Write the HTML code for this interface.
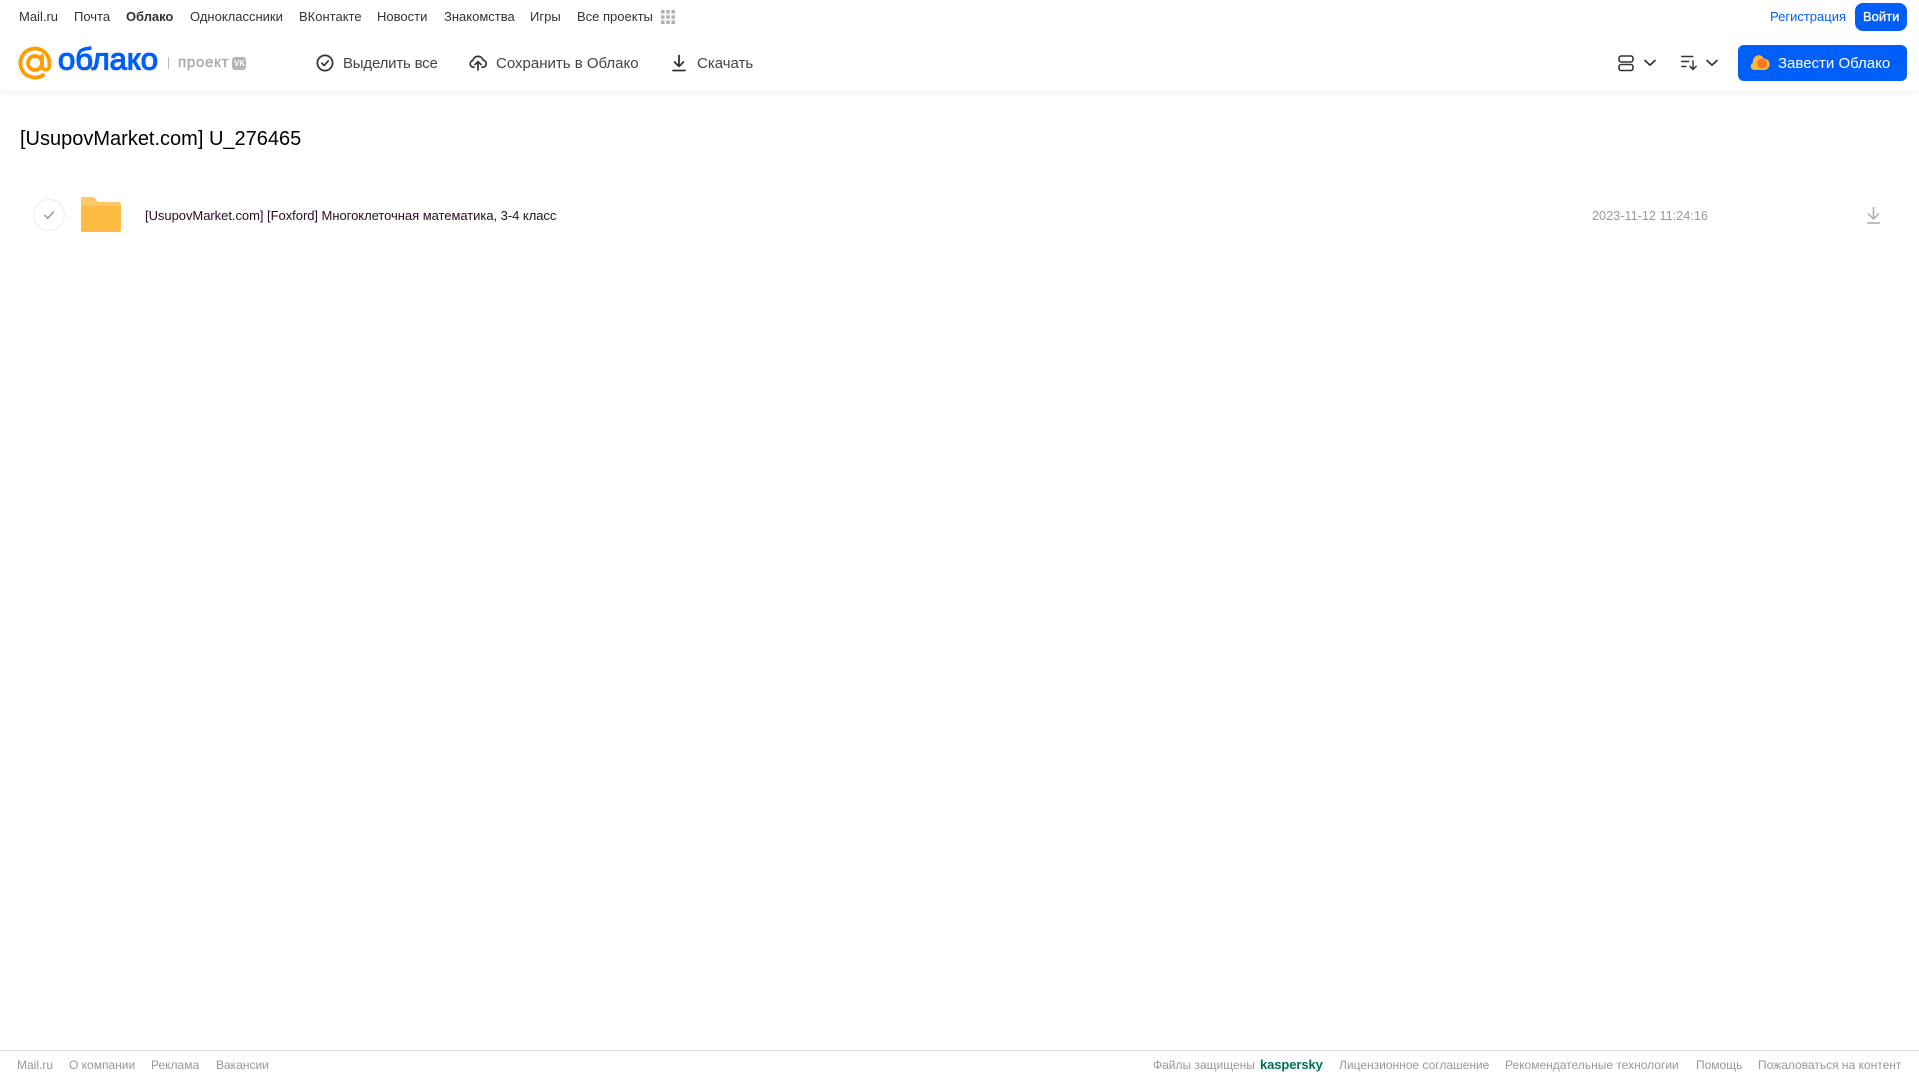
<!DOCTYPE html>
<html lang="ru">
<head>
<meta charset="utf-8">
<title>Облако</title>
<style>
html,body{margin:0;padding:0;background:#fff;width:1919px;height:1079px;overflow:hidden}
body{position:relative;font-family:"Liberation Sans",Arial,sans-serif;color:#333}
.t{position:absolute;white-space:nowrap;line-height:16px}
.n{top:9px;font-size:13px;color:#333}
.b{top:56px;font-size:15px;color:#444}
.f{top:1058px;font-size:12px;color:#999;line-height:14px}
svg{position:absolute;display:block;overflow:visible}
#hdr{position:absolute;left:0;top:0;width:1919px;height:91px;background:#fff;box-shadow:0 1px 6px rgba(0,0,0,.08)}
#foot{position:absolute;left:0;top:1050px;width:1919px;height:1px;background:#ddd}
.btn{position:absolute;background:#005ff9}
</style>
</head>
<body>
<div id="hdr"></div>
<span class="t n" style="left:19px">Mail.ru</span>
<span class="t n" style="left:74px">Почта</span>
<span class="t n" style="left:126px;font-weight:bold;letter-spacing:-.05px">Облако</span>
<span class="t n" style="left:190px">Одноклассники</span>
<span class="t n" style="left:299px">ВКонтакте</span>
<span class="t n" style="left:377px">Новости</span>
<span class="t n" style="left:444px">Знакомства</span>
<span class="t n" style="left:530px">Игры</span>
<span class="t n" style="left:577px">Все проекты</span>
<svg style="left:661px;top:10px" width="14" height="14" fill="#b0b0b0"><rect x="0" y="0" width="3.6" height="3.6" rx=".8"/><rect x="5.2" y="0" width="3.6" height="3.6" rx=".8"/><rect x="10.4" y="0" width="3.6" height="3.6" rx=".8"/><rect x="0" y="5.2" width="3.6" height="3.6" rx=".8"/><rect x="5.2" y="5.2" width="3.6" height="3.6" rx=".8"/><rect x="10.4" y="5.2" width="3.6" height="3.6" rx=".8"/><rect x="0" y="10.4" width="3.6" height="3.6" rx=".8"/><rect x="5.2" y="10.4" width="3.6" height="3.6" rx=".8"/><rect x="10.4" y="10.4" width="3.6" height="3.6" rx=".8"/></svg>
<span class="t n" style="left:1770px;color:#005ff9">Регистрация</span>
<div class="btn" style="left:1855px;top:3px;width:52px;height:28px;border-radius:8px"></div>
<span class="t n" style="left:1863px;color:#fff;-webkit-text-stroke:.3px #fff">Войти</span>

<svg style="left:0;top:40px" width="170" height="45">
<g fill="none" stroke="#ff9e00" stroke-width="3.800" stroke-linecap="round"><circle cx="35" cy="23" r="7"/><path d="M42 16v10a3.700 3.700 0 0 0 7.400 0v-3a14.500 14.500 0 1 0-6.300 12"/></g>
<text x="58" y="29.500" font-family="'Liberation Sans',sans-serif" font-size="31" fill="#005ff9" stroke="#005ff9" stroke-width="1.200" textLength="100" lengthAdjust="spacingAndGlyphs">облако</text>
<rect x="168" y="17" width="1" height="12" fill="#bbb"/>
</svg>
<span class="t" style="left:178px;top:55px;font-size:15px;color:#aaa;-webkit-text-stroke:.4px #aaa;letter-spacing:.75px">проект</span>
<div style="position:absolute;left:232px;top:57px;width:14px;height:13px;background:#b5b5b5;border-radius:3px"></div>
<span class="t" style="left:234px;top:58px;font-size:8px;line-height:11px;font-weight:bold;color:#fff">VK</span>

<svg style="left:316px;top:54px" width="18" height="18" fill="none" stroke="#333" stroke-width="1.700" stroke-linecap="round" stroke-linejoin="round"><circle cx="9" cy="9" r="7.600"/><path d="M5.800 9.200l2.300 2.300 4.200-4.600"/></svg>
<span class="t b" style="left:343px;letter-spacing:-.2px">Выделить все</span>
<svg style="left:469px;top:53px" width="18" height="18" fill="none" stroke="#333" stroke-width="1.700" stroke-linecap="round" stroke-linejoin="round"><path d="M5 14.200H4.400a3.400 3.400 0 0 1-.6-6.700 5.400 5.400 0 0 1 10.400-.4 3.600 3.600 0 0 1 .1 7.100H13"/><path d="M9 17V9M6 11.500L9 8.600l3 2.900"/></svg>
<span class="t b" style="left:496px">Сохранить в Облако</span>
<svg style="left:670px;top:54px" width="18" height="18" fill="none" stroke="#333" stroke-width="1.800" stroke-linecap="round" stroke-linejoin="round"><path d="M9 1.500v10.500M4.600 8L9 12.400 13.400 8M3 16.500h12"/></svg>
<span class="t b" style="left:697px">Скачать</span>

<svg style="left:1617px;top:54px" width="18" height="18" fill="none" stroke="#333" stroke-width="1.600"><rect x="2" y="2" width="14" height="6" rx="2.200"/><rect x="2" y="10.500" width="14" height="6" rx="2.200"/></svg>
<svg style="left:1644px;top:59px" width="13" height="8" fill="none" stroke="#333" stroke-width="1.700" stroke-linecap="round" stroke-linejoin="round"><path d="M1 1.500l5 4.600 5-4.600"/></svg>
<svg style="left:1681px;top:55px" width="17" height="16" fill="none" stroke="#333" stroke-width="1.400" stroke-linecap="round" stroke-linejoin="round"><path d="M.8 1.500h11M.8 6.500h7M.8 11.500h4M12 6v8.500M8.800 11.300l3.200 3.200 3.200-3.200"/></svg>
<svg style="left:1706px;top:59px" width="13" height="8" fill="none" stroke="#333" stroke-width="1.700" stroke-linecap="round" stroke-linejoin="round"><path d="M1 1.500l5 4.600 5-4.600"/></svg>
<div class="btn" style="left:1738px;top:45px;width:169px;height:36px;border-radius:6px"></div>
<svg style="left:1750px;top:54px" width="20" height="17"><path d="M4.500 16A3.800 3.800 0 0 1 3 8.700 5.800 5.800 0 0 1 6 2 5.400 5.400 0 0 1 13.800 4.500 5.800 5.800 0 0 1 15 16z" fill="#ffb43a"/><circle cx="12" cy="9.500" r="5" fill="#f47a24"/></svg>
<span class="t" style="left:1778px;top:56px;font-size:15px;color:#fff">Завести Облако</span>

<span class="t" style="left:20px;top:127px;font-size:20px;line-height:24px;color:#000">[UsupovMarket.com] U_276465</span>

<svg style="left:33px;top:199px" width="33" height="33" fill="none"><circle cx="16" cy="16" r="15.500" fill="#fff" stroke="#ececec"/><path d="M11.700 16.300l3 3 5.600-6.200" stroke="#999" stroke-width="1.500" stroke-linecap="round" stroke-linejoin="round"/></svg>
<svg style="left:81px;top:197px" width="40" height="35"><path d="M2 0h9c2 0 3 1 3.800 2.200S16.500 5 18.500 5H38a2 2 0 0 1 2 2v26a2 2 0 0 1-2 2H2a2 2 0 0 1-2-2V2a2 2 0 0 1 2-2z" fill="#ffc767"/><path d="M0 9h40v24a2 2 0 0 1-2 2H2a2 2 0 0 1-2-2z" fill="#ffbc45"/></svg>
<span class="t" style="left:145px;top:208px;font-size:13px;color:#2b0a2b;letter-spacing:-.04px">[UsupovMarket.com] [Foxford] Многоклеточная математика, 3-4 класс</span>
<span class="t" style="left:1592px;top:208px;font-size:12.700px;color:#999">2023-11-12 11:24:16</span>
<svg style="left:1866px;top:206px" width="15" height="18" fill="none" stroke="#aaa" stroke-width="1.500" stroke-linecap="round" stroke-linejoin="round"><path d="M7.500 1.500v11.500M2.500 8l5 5 5-5M1.500 17h12"/></svg>

<div id="foot"></div>
<span class="t f" style="left:17px">Mail.ru</span>
<span class="t f" style="left:69px">О компании</span>
<span class="t f" style="left:151px">Реклама</span>
<span class="t f" style="left:216px">Вакансии</span>
<span class="t f" style="left:1153px">Файлы защищены</span>
<span class="t f" style="left:1260px;font-size:13px;font-weight:bold;color:#006d5c;letter-spacing:-.1px">kaspersky</span>
<span class="t f" style="left:1339px">Лицензионное соглашение</span>
<span class="t f" style="left:1505px">Рекомендательные технологии</span>
<span class="t f" style="left:1696px">Помощь</span>
<span class="t f" style="left:1758px">Пожаловаться на контент</span>
</body>
</html>
